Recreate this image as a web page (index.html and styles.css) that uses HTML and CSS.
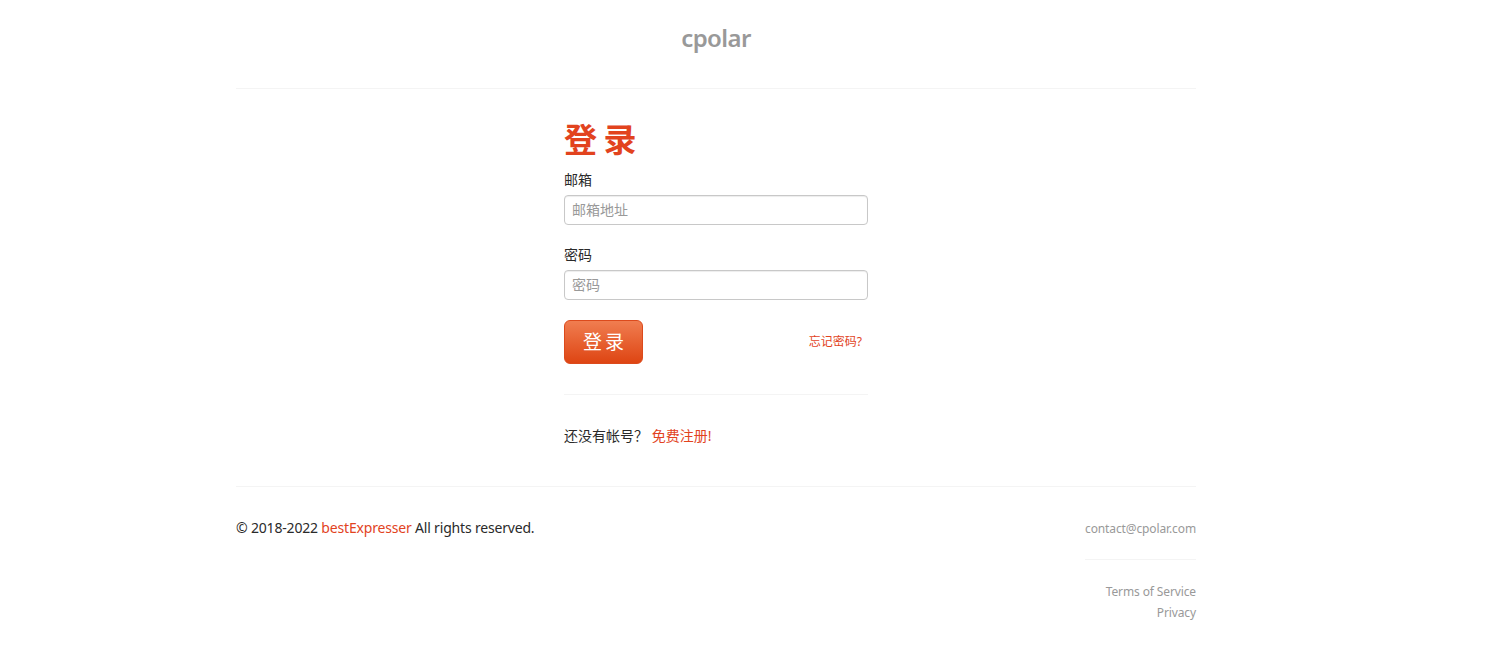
FILE: index.html
```html
<!DOCTYPE html>
<html lang="zh">
<head>
  <meta charset="UTF-8" />
  <title>登录 | cpolar</title>
  <link rel="stylesheet" href="styles.css">
</head>
<body>
  <div class="container">
    <header class="site-header">
      <a class="logo" href="#">cpolar</a>
    </header>

    <main class="login">
      <h1>登 录</h1>
      <form>
        <label for="email">邮箱</label>
        <input type="text" id="email" placeholder="邮箱地址">

        <label for="password">密码</label>
        <input type="password" id="password" placeholder="密码">

        <div class="actions">
          <button type="submit">登 录</button>
          <a class="forgot" href="#">忘记密码?</a>
        </div>
      </form>
      <hr>
      <p class="signup">还没有帐号？ <a href="#">免费注册!</a></p>
    </main>

    <footer class="site-footer">
      <p class="copyright">© 2018-2022 <a href="#">bestExpresser</a> All rights reserved.</p>
      <div class="links">
        <a class="contact" href="#">contact@cpolar.com</a>
        <hr>
        <a href="#">Terms of Service</a>
        <a href="#">Privacy</a>
      </div>
    </footer>
  </div>
</body>
</html>
```

FILE: styles.css
```css
body {
  font-family: "Noto Sans", "Noto Sans CJK SC", sans-serif;
  font-size: 14px;
  color: #2a2a2a;
  background: #fff;
  margin: 0;
  padding: 0;
}
a {
  color: #e2431e;
  text-decoration: none;
}
hr {
  border: none;
  border-top: 1px solid #f4f4f4;
  margin: 0;
}
.container {
  width: 960px;
  margin-left: 236px;
}
.site-header {
  height: 88px;
  border-bottom: 1px solid #f4f4f4;
  text-align: center;
}
.logo {
  display: block;
  padding-top: 20px;
  font-size: 24px;
  line-height: 36px;
  font-weight: 600;
  letter-spacing: -0.6px;
  color: #999;
}
.login {
  width: 304px;
  margin: 0 auto;
  padding-top: 26px;
  height: 397px;
  box-sizing: border-box;
}
h1 {
  font-family: "Noto Sans CJK SC", sans-serif;
  font-size: 33px;
  line-height: 46px;
  font-weight: 700;
  word-spacing: -1px;
  color: #e2431e;
  margin: 0 0 9px;
}
label {
  display: block;
  font-size: 14px;
  line-height: 20px;
  margin-bottom: 5px;
}
input {
  display: block;
  width: 100%;
  height: 30px;
  box-sizing: border-box;
  padding: 0 7px 2px;
  margin-bottom: 20px;
  border: 1px solid #c8c8c8;
  border-radius: 4px;
  box-shadow: inset 0 1px 1px rgba(0, 0, 0, 0.075);
  font-family: inherit;
  font-size: 14px;
}
input::placeholder {
  color: #999;
}
.actions {
  display: flex;
  justify-content: space-between;
  align-items: center;
  padding-right: 6px;
  margin-bottom: 30px;
}
button {
  width: 79px;
  height: 44px;
  padding: 0 0 2px;
  border: 1px solid #dc4a1c;
  border-radius: 6px;
  background: linear-gradient(#f07d50, #de4513);
  color: #fff;
  font-family: inherit;
  font-size: 19px;
  word-spacing: -2px;
  cursor: pointer;
}
.forgot {
  font-size: 12px;
  padding-bottom: 2px;
}
.signup {
  margin: 31px 0 0;
  line-height: 20px;
}
.site-footer {
  display: flex;
  justify-content: space-between;
  border-top: 1px solid #f4f4f4;
  padding-top: 31px;
}
.copyright {
  margin: 0;
  line-height: 20px;
  letter-spacing: -0.18px;
}
.links {
  width: 111px;
  text-align: right;
  font-size: 12px;
  line-height: 21px;
  letter-spacing: -0.12px;
}
.links a {
  display: block;
  color: #999;
}
.links hr {
  margin: 20px 0 21px;
}
```
